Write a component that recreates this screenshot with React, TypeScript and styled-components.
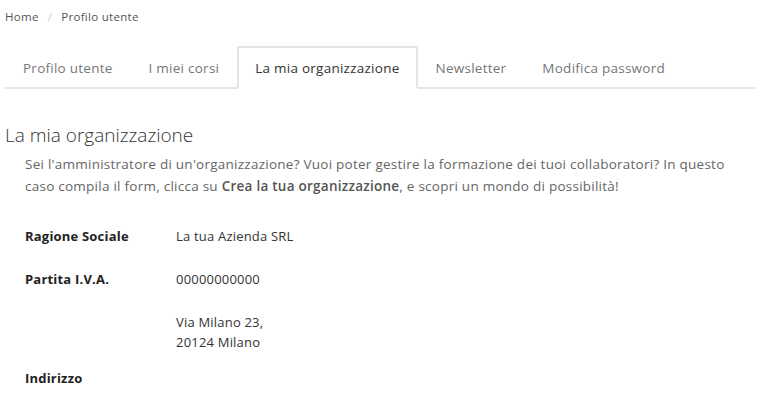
import React from 'react'
import styled, { createGlobalStyle } from 'styled-components'

const GlobalStyle = createGlobalStyle`
  body {
    margin: 0;
    background: #fff;
    font-family: 'Open Sans', 'Liberation Sans', sans-serif;
    color: #333;
  }
`

const tabs = ['Profilo utente', 'I miei corsi', 'La mia organizzazione', 'Newsletter', 'Modifica password']

const fields = [
  { label: 'Ragione Sociale', value: ['La tua Azienda SRL'] },
  { label: 'Partita I.V.A.', value: ['00000000000'] },
  { label: 'Indirizzo', value: ['Via Milano 23,', '20124 Milano'] },
]

const App: React.FC = () => {
  return (
    <>
      <GlobalStyle />
      <StyledPage>
        <StyledBreadcrumb>
          <span>Home</span>
          <StyledSeparator>/</StyledSeparator>
          <span>Profilo utente</span>
        </StyledBreadcrumb>
        <StyledTabs>
          {tabs.map((t) => (
            <StyledTab key={t} active={t === 'La mia organizzazione'}>
              {t}
            </StyledTab>
          ))}
        </StyledTabs>
        <StyledTitle>La mia organizzazione</StyledTitle>
        <StyledIntro>
          Sei l'amministratore di un'organizzazione? Vuoi poter gestire la formazione dei tuoi collaboratori? In questo
          caso compila il form, clicca su <b>Crea la tua organizzazione</b>, e scopri un mondo di possibilità!
        </StyledIntro>
        <StyledFields>
          {fields.map((f) => (
            <StyledRow key={f.label}>
              <StyledLabel below={f.value.length > 1}>{f.label}</StyledLabel>
              <StyledValue>
                {f.value.map((v) => (
                  <div key={v}>{v}</div>
                ))}
              </StyledValue>
            </StyledRow>
          ))}
        </StyledFields>
      </StyledPage>
    </>
  )
}

const StyledPage = styled.div`
  width: 750px;
  margin-left: 5px;
`

const StyledBreadcrumb = styled.div`
  display: flex;
  align-items: center;
  height: 32px;
  font-size: 11.5px;
  letter-spacing: 0.3px;
  color: #555;
`

const StyledSeparator = styled.span`
  color: #ccc;
  margin: 0 9px;
`

const StyledTabs = styled.div`
  display: flex;
  margin-top: 14px;
  border-bottom: 2px solid #e5e5e5;
`

const StyledTab = styled.div<{ active?: boolean }>`
  height: 39px;
  display: flex;
  align-items: center;
  padding: 0 16px;
  margin-bottom: -2px;
  font-size: 13.5px;
  letter-spacing: 0.25px;
  color: ${(props) => (props.active ? '#333' : '#777')};
  background: ${(props) => (props.active ? '#fff' : 'transparent')};
  border: 2px solid ${(props) => (props.active ? '#e5e5e5' : 'transparent')};
  border-bottom-color: ${(props) => (props.active ? '#fff' : 'transparent')};
`

const StyledTitle = styled.h2`
  margin: 33px 0 0;
  font-size: 19px;
  font-weight: 300;
  line-height: 26px;
  color: #333;
`

const StyledIntro = styled.p`
  margin: 5px 0 0;
  padding-left: 20px;
  font-size: 13.5px;
  letter-spacing: 0.25px;
  line-height: 22px;
  color: #666;

  b {
    color: #555;
    font-weight: 600;
  }
`

const StyledFields = styled.div`
  display: flex;
  flex-direction: column;
  padding-left: 20px;
  margin-top: 29px;
`

const StyledRow = styled.div`
  display: grid;
  grid-template-columns: 151px 1fr;
  row-gap: 16px;
  min-height: 43px;
  font-size: 13px;
  letter-spacing: 0.2px;
  line-height: 20px;
  align-items: start;
`

const StyledLabel = styled.div<{ below?: boolean }>`
  grid-column: 1;
  grid-row: ${(props) => (props.below ? 2 : 1)};
  font-weight: 700;
  color: #222;
`

const StyledValue = styled.div`
  grid-column: 2;
  grid-row: 1;
  color: #333;
`

export default App
